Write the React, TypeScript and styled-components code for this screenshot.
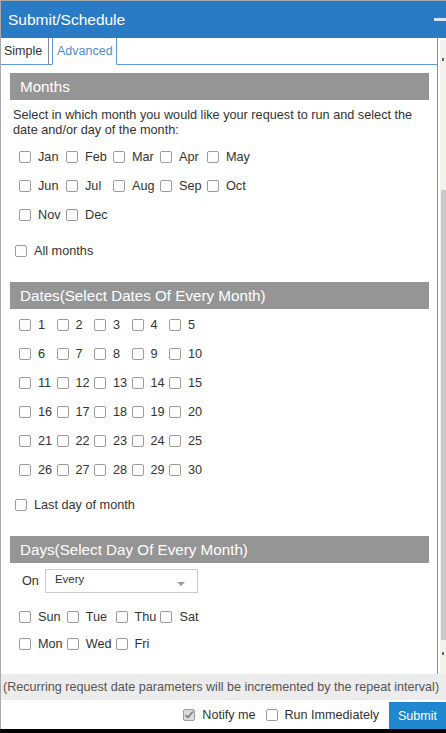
import React from 'react';
import styled, { createGlobalStyle } from 'styled-components';

const FONT = `"Liberation Sans", Arial, sans-serif`;
const BLUE_LINE = '#5a9bd8';
const TEXT = '#333333';

const GlobalStyle = createGlobalStyle`
  html, body {
    margin: 0;
    padding: 0;
    background: #000;
  }
  body {
    font-family: ${FONT};
    color: ${TEXT};
  }
  * {
    box-sizing: border-box;
  }
`;

const Window = styled.div`
  width: 446px;
  height: 729px;
  display: flex;
  flex-direction: column;
  background: #fff;
  border-top: 1px solid #a9a9a9;
  border-left: 1px solid #a9a9a9;
  overflow: hidden;
`;

const TitleBar = styled.div`
  height: 37px;
  flex-shrink: 0;
  display: flex;
  align-items: center;
  padding-left: 7px;
  background: #2a7bc6;
  color: #fff;
  font-size: 15.5px;
`;

const Minimize = styled.span`
  align-self: flex-start;
  margin: 17px 0 0 auto;
  width: 12px;
  height: 3px;
  background: #d9e6f4;
`;

const Body = styled.div`
  flex: 1;
  min-height: 0;
  display: flex;
`;

const Main = styled.div`
  flex: 1;
  min-width: 0;
  display: flex;
  flex-direction: column;
`;

const TabStrip = styled.div`
  height: 27px;
  flex-shrink: 0;
  display: flex;
  margin-right: 2px;
  font-size: 12.5px;
`;

const Tab = styled.div<{ $active?: boolean }>`
  display: flex;
  align-items: center;
  padding: 0 ${(p) => (p.$active ? '4px' : '3px')};
  color: ${(p) => (p.$active ? '#4a8fd6' : TEXT)};
  border-bottom: 1px solid ${(p) => (p.$active ? 'transparent' : BLUE_LINE)};
  border-right: 1px solid ${(p) => (p.$active ? BLUE_LINE : '#8a8a8a')};
  border-left: ${(p) => (p.$active ? `1px solid ${BLUE_LINE}` : 'none')};
  width: ${(p) => (p.$active ? '65px' : '48px')};
`;

const TabGap = styled.div<{ $grow?: boolean }>`
  width: 3px;
  flex: ${(p) => (p.$grow ? 1 : 'none')};
  border-bottom: 1px solid ${BLUE_LINE};
  border-right: ${(p) => (p.$grow ? `1px solid ${BLUE_LINE}` : 'none')};
`;

const Panel = styled.div`
  flex: 1;
  min-height: 0;
  overflow: hidden;
  margin-right: 2px;
  border-right: 1px solid ${BLUE_LINE};
  padding: 8px 8px 0 9px;
  font-size: 12.7px;
`;

const SectionHeader = styled.div<{ $gap?: number }>`
  height: 27px;
  margin-top: ${(p) => p.$gap ?? 0}px;
  display: flex;
  align-items: center;
  padding-left: 10px;
  background: #959595;
  color: #fff;
  font-size: 15.2px;
`;

const Description = styled.p`
  margin: 8px 0 0 3px;
  line-height: 15px;
`;

const CheckGrid = styled.div<{ $col: string; $row: number; $gap: number }>`
  display: grid;
  grid-template-columns: ${(p) => p.$col};
  grid-auto-rows: ${(p) => p.$row}px;
  justify-content: start;
  margin: ${(p) => p.$gap}px 0 0 9px;
`;

const CheckItem = styled.label<{ $pad?: number }>`
  display: flex;
  align-items: center;
  white-space: nowrap;
  padding-right: ${(p) => p.$pad ?? 0}px;
`;

const SingleCheck = styled(CheckItem)<{ $gap: number }>`
  height: 20px;
  margin: ${(p) => p.$gap}px 0 0 5px;
`;

const Box = styled.span<{ $checked?: boolean }>`
  width: 12px;
  height: 12px;
  flex-shrink: 0;
  margin-right: 7px;
  border: 1px solid ${(p) => (p.$checked ? '#9c9c9c' : '#a09a98')};
  border-radius: 2px;
  background: ${(p) => (p.$checked ? '#dcdcdc' : '#fff')};
  display: flex;
  align-items: center;
  justify-content: center;
`;

const OnRow = styled.div`
  height: 24px;
  margin: 6px 0 0 12px;
  display: flex;
  align-items: center;
  gap: 6px;
`;

const Select = styled.div`
  width: 153px;
  height: 24px;
  border: 1px solid #cbcbcb;
  display: flex;
  align-items: flex-start;
  padding: 3px 12px 0 9px;
  font-size: 11.5px;
`;

const Caret = styled.span`
  margin: 9px 0 0 auto;
  width: 0;
  height: 0;
  border-left: 4px solid transparent;
  border-right: 4px solid transparent;
  border-top: 4px solid #9a9a9a;
`;

const Scrollbar = styled.div`
  width: 6px;
  margin-top: 2px;
  display: flex;
  flex-direction: column;
  align-items: flex-end;
  background: #f2f1eb;
`;

const ScrollArrow = styled.span<{ $gap: number }>`
  margin: ${(p) => p.$gap}px 2px 0 0;
  width: 2px;
  height: 3px;
  background: #666;
`;

const ScrollThumb = styled.span`
  margin-top: 129px;
  width: 5px;
  height: 450px;
  background: #c8c8c8;
`;

const NoteBar = styled.div`
  height: 26px;
  flex-shrink: 0;
  display: flex;
  align-items: center;
  padding-left: 2px;
  background: #ececec;
  color: #555;
  font-size: 12.6px;
  white-space: nowrap;
`;

const ActionBar = styled.div`
  height: 29px;
  flex-shrink: 0;
  display: flex;
  justify-content: flex-end;
  align-items: center;
  gap: 10px;
  font-size: 12.6px;
`;

const SubmitButton = styled.button`
  align-self: flex-end;
  width: 57px;
  height: 27px;
  border: none;
  padding: 0;
  background: #1f86cf;
  color: #fff;
  font-family: ${FONT};
  font-size: 12.6px;
  cursor: pointer;
`;

const months = ['Jan', 'Feb', 'Mar', 'Apr', 'May', 'Jun', 'Jul', 'Aug', 'Sep', 'Oct', 'Nov', 'Dec'];
const dates = Array.from({ length: 30 }, (_, i) => String(i + 1));
const days = ['Sun', 'Tue', 'Thu', 'Sat', 'Mon', 'Wed', 'Fri'];

const CheckBox: React.FC<{ checked?: boolean }> = ({ checked }) => (
  <Box $checked={checked}>
    {checked && (
      <svg width="11" height="10" viewBox="0 0 11 10">
        <path d="M1.5 5 L4.2 7.8 L9.8 1.2" fill="none" stroke="#7b7b7b" strokeWidth="1.8" />
      </svg>
    )}
  </Box>
);

const Check: React.FC<{ label: string; checked?: boolean; pad?: number }> = ({ label, checked, pad }) => (
  <CheckItem $pad={pad}>
    <CheckBox checked={checked} />
    {label}
  </CheckItem>
);

export default function App() {
  return (
    <>
      <GlobalStyle />
      <Window>
        <TitleBar>
          Submit/Schedule
          <Minimize />
        </TitleBar>

        <Body>
          <Main>
            <TabStrip>
              <Tab>Simple</Tab>
              <TabGap />
              <Tab $active>Advanced</Tab>
              <TabGap $grow />
            </TabStrip>

            <Panel>
              <SectionHeader>Months</SectionHeader>
              <Description>
                Select in which month you would like your request to run and select the date and/or day of the month:
              </Description>
              <CheckGrid $col="repeat(5, 47px)" $row={29} $gap={4}>
                {months.map((m) => (
                  <Check key={m} label={m} />
                ))}
              </CheckGrid>
              <SingleCheck $gap={12}>
                <CheckBox />
                All months
              </SingleCheck>

              <SectionHeader $gap={21}>Dates(Select Dates Of Every Month)</SectionHeader>
              <CheckGrid $col="repeat(5, 37.5px)" $row={29} $gap={1}>
                {dates.map((d) => (
                  <Check key={d} label={d} />
                ))}
              </CheckGrid>
              <SingleCheck $gap={11}>
                <CheckBox />
                Last day of month
              </SingleCheck>

              <SectionHeader $gap={21}>Days(Select Day Of Every Month)</SectionHeader>
              <OnRow>
                On
                <Select>
                  Every
                  <Caret />
                </Select>
              </OnRow>
              <CheckGrid $col="repeat(4, auto)" $row={27} $gap={10}>
                {days.map((d) => (
                  <Check key={d} label={d} pad={4} />
                ))}
              </CheckGrid>
            </Panel>
          </Main>

          <Scrollbar>
            <ScrollArrow $gap={18} />
            <ScrollThumb />
            <ScrollArrow $gap={12} />
          </Scrollbar>
        </Body>

        <NoteBar>(Recurring request date parameters will be incremented by the repeat interval)</NoteBar>

        <ActionBar>
          <CheckItem>
            <CheckBox checked />
            Notify me
          </CheckItem>
          <CheckItem>
            <CheckBox />
            Run Immediately
          </CheckItem>
          <SubmitButton>Submit</SubmitButton>
        </ActionBar>
      </Window>
    </>
  );
}
